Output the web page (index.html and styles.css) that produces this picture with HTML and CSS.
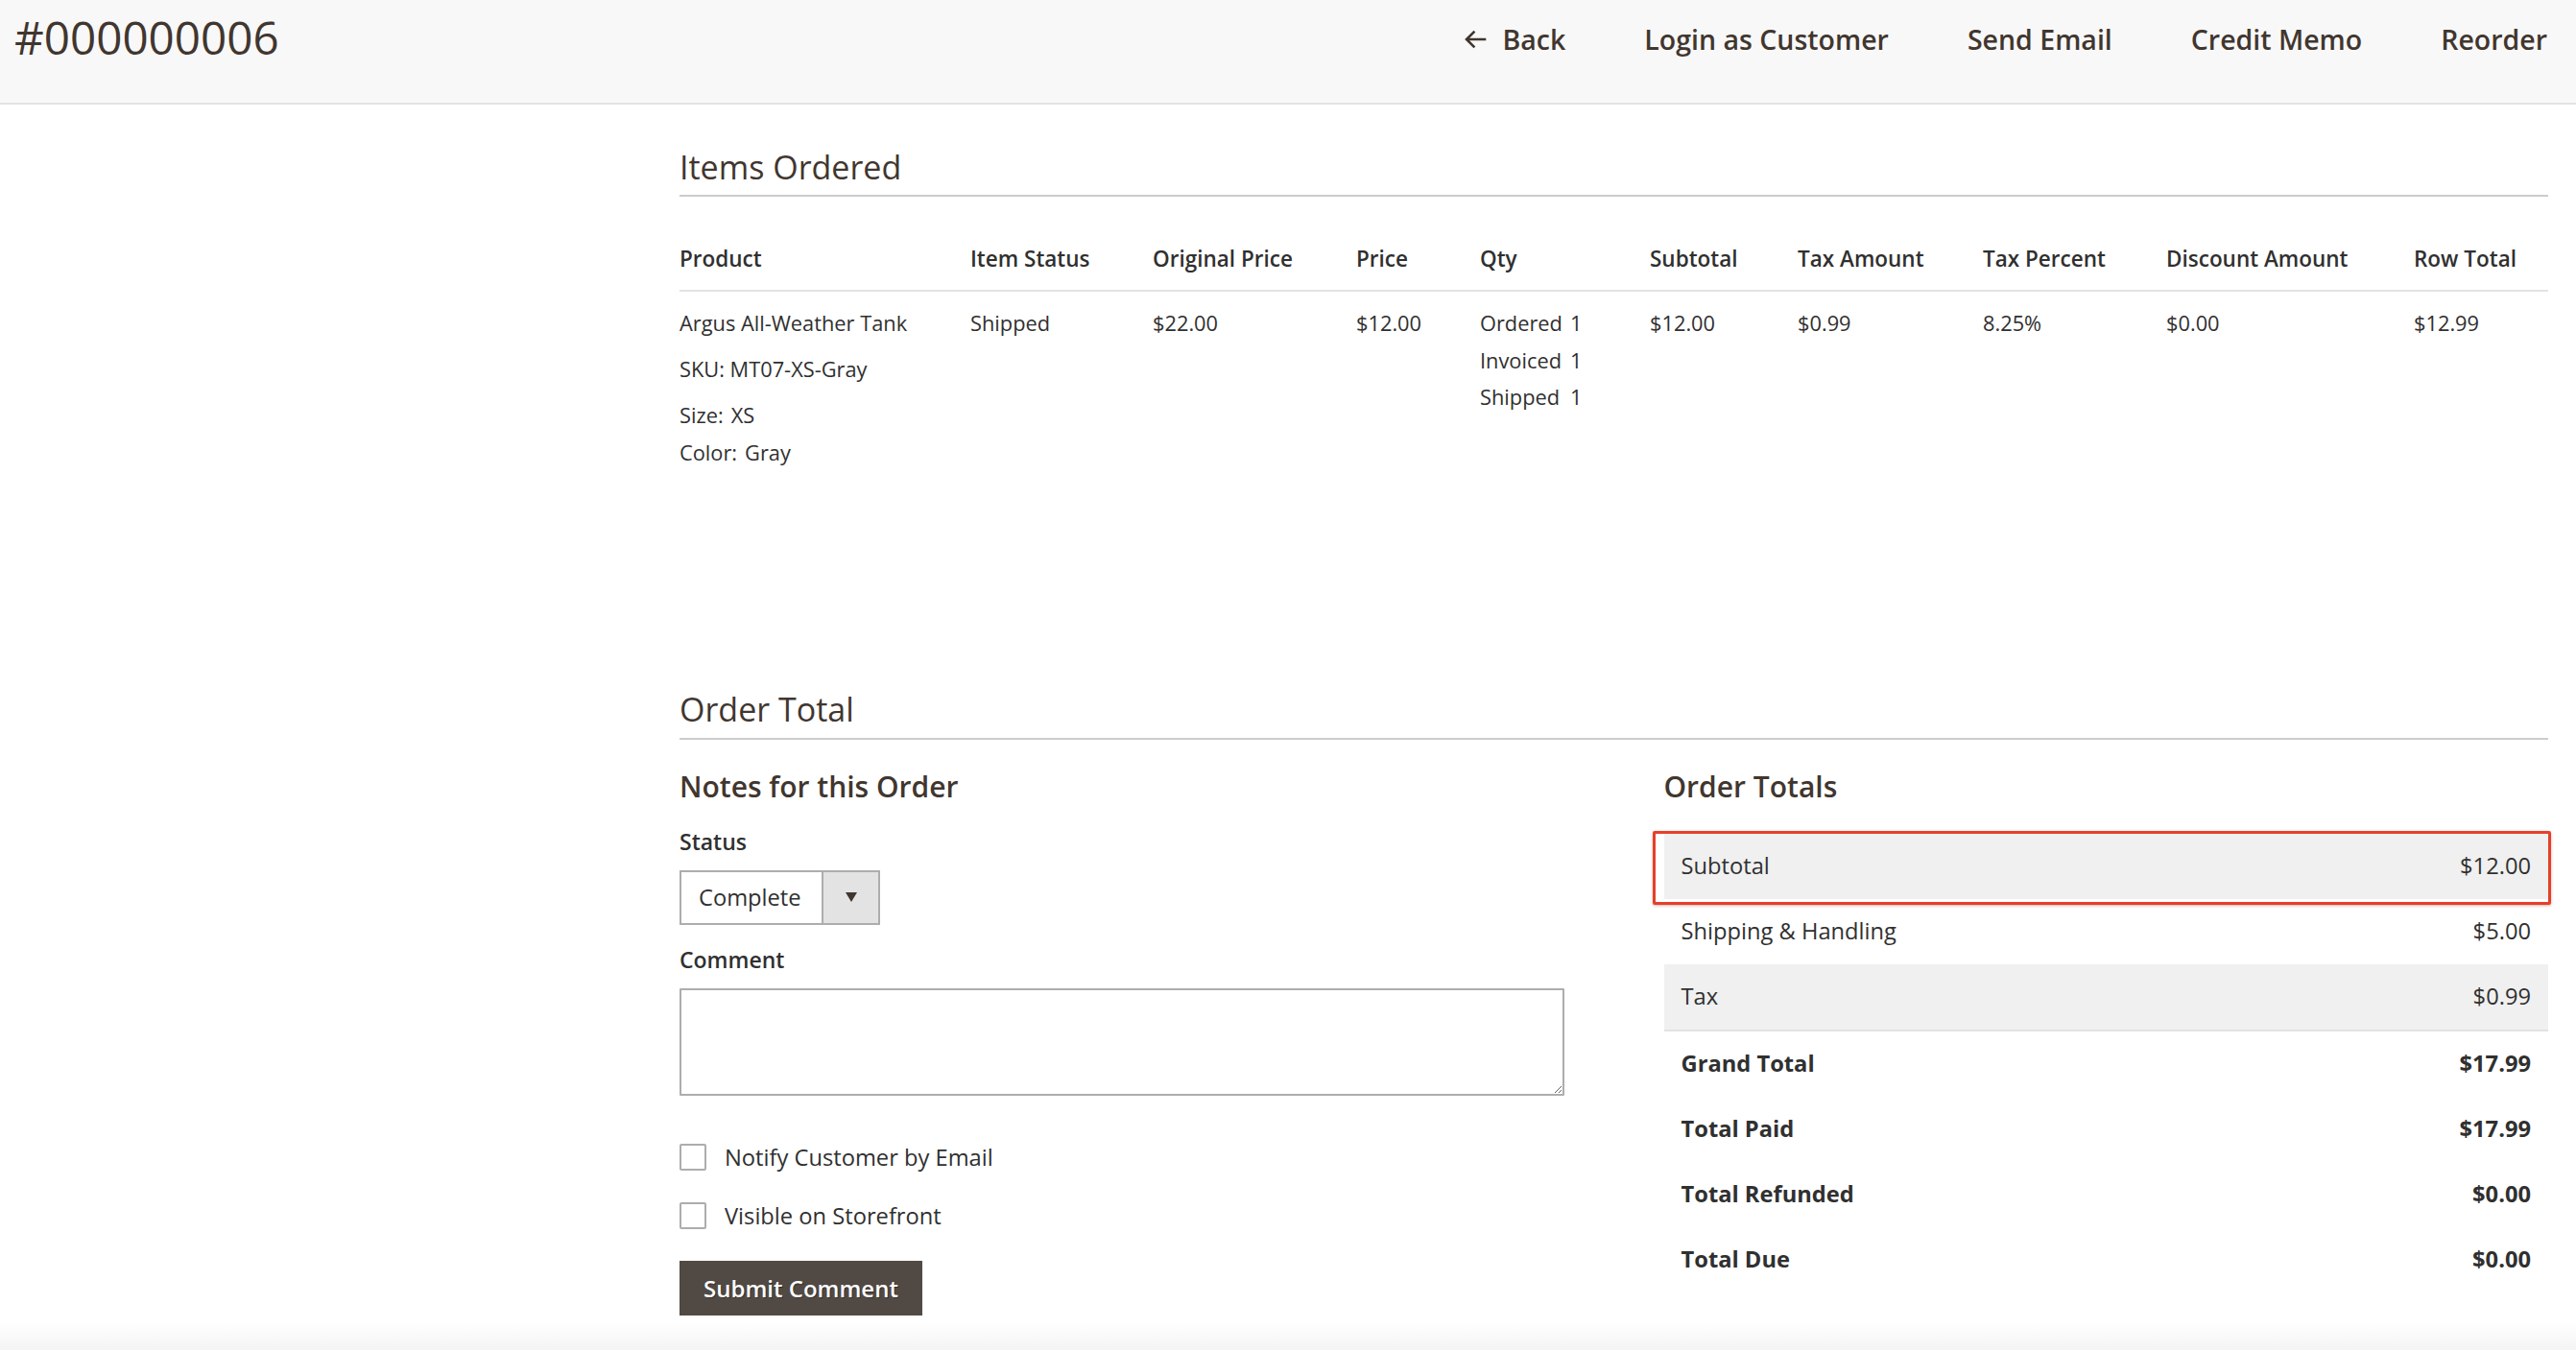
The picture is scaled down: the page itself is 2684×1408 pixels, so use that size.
FILE: index.html
```html
<!DOCTYPE html>
<html lang="en">
<head>
<meta charset="utf-8">
<title>#000000006</title>
<link rel="stylesheet" href="styles.css">
</head>
<body>
<header class="page-header">
  <h1 class="page-title">#000000006</h1>
  <nav class="page-actions">
    <a class="action action-back"><svg class="back-icon" viewBox="0 0 24 22" width="24" height="22"><path d="M22 11H3.5M10.5 3.5L3 11l7.5 7.5" fill="none" stroke="#41362f" stroke-width="2.6" stroke-linecap="square"/></svg>Back</a>
    <a class="action">Login as Customer</a>
    <a class="action">Send Email</a>
    <a class="action">Credit Memo</a>
    <a class="action">Reorder</a>
  </nav>
</header>

<div class="page-body">
  <aside class="side-col"></aside>
  <main class="main-col">
    <section class="items-section">
      <h2 class="section-title">Items Ordered</h2>
      <table class="items-table">
        <colgroup>
          <col class="c-product"><col class="c-status"><col class="c-orig"><col class="c-price"><col class="c-qty"><col class="c-sub"><col class="c-taxamt"><col class="c-taxpct"><col class="c-disc"><col class="c-row">
        </colgroup>
        <thead>
          <tr>
            <th>Product</th><th>Item Status</th><th>Original Price</th><th>Price</th><th>Qty</th><th>Subtotal</th><th>Tax Amount</th><th>Tax Percent</th><th>Discount Amount</th><th>Row Total</th>
          </tr>
        </thead>
        <tbody>
          <tr>
            <td>
              <div class="product-name">Argus All-Weather Tank</div>
              <div class="product-sku">SKU: MT07-XS-Gray</div>
              <dl class="product-options">
                <div class="opt"><dt>Size:</dt><dd>XS</dd></div>
                <div class="opt"><dt>Color:</dt><dd>Gray</dd></div>
              </dl>
            </td>
            <td>Shipped</td>
            <td>$22.00</td>
            <td>$12.00</td>
            <td>
              <table class="qty-table">
                <tr><th class="qty-label">Ordered</th><td class="qty-val">1</td></tr>
                <tr><th class="qty-label">Invoiced</th><td class="qty-val">1</td></tr>
                <tr><th class="qty-label">Shipped</th><td class="qty-val">1</td></tr>
              </table>
            </td>
            <td>$12.00</td>
            <td>$0.99</td>
            <td>8.25%</td>
            <td>$0.00</td>
            <td>$12.99</td>
          </tr>
        </tbody>
      </table>
    </section>

    <section class="totals-section">
      <h2 class="section-title">Order Total</h2>
      <div class="totals-cols">
        <div class="notes">
          <h3 class="item-title">Notes for this Order</h3>
          <div class="field-label first">Status</div>
          <div class="select">
            <span class="select-value">Complete</span>
            <span class="select-arrow"><svg viewBox="0 0 12 10" width="12" height="10"><path d="M0 0h12L6 10z" fill="#41362f"/></svg></span>
          </div>
          <div class="field-label">Comment</div>
          <textarea class="comment"></textarea>
          <label class="check"><span class="box"></span>Notify Customer by Email</label>
          <label class="check"><span class="box"></span>Visible on Storefront</label>
          <div class="submit">Submit Comment</div>
        </div>
        <div class="order-totals">
          <h3 class="item-title">Order Totals</h3>
          <div class="totals-table">
            <div class="t-row shade"><span>Subtotal</span><span>$12.00</span><div class="annot"></div></div>
            <div class="t-row"><span>Shipping &amp; Handling</span><span>$5.00</span></div>
            <div class="t-row shade last"><span>Tax</span><span>$0.99</span></div>
            <div class="t-row strong"><span>Grand Total</span><span>$17.99</span></div>
            <div class="t-row strong"><span>Total Paid</span><span>$17.99</span></div>
            <div class="t-row strong"><span>Total Refunded</span><span>$0.00</span></div>
            <div class="t-row strong"><span>Total Due</span><span>$0.00</span></div>
          </div>
        </div>
      </div>
    </section>
  </main>
</div>
<footer class="page-footer"></footer>
</body>
</html>
```

FILE: styles.css
```css
* { box-sizing: border-box; }
html, body { margin: 0; padding: 0; }
body {
  font-family: "Open Sans", "Liberation Sans", sans-serif;
  color: #303030;
  background: #ffffff;
  overflow: hidden;
}

/* header */
.page-header {
  height: 109px;
  background: #f8f8f8;
  border-bottom: 2px solid #e3e3e3;
  display: flex;
  justify-content: space-between;
  align-items: flex-start;
  padding: 0 30px 0 15px;
}
.page-title {
  margin: 0;
  padding-top: 15px;
  font-size: 47.6px;
  line-height: 1;
  font-weight: 400;
  color: #41362f;
}
.page-actions {
  display: flex;
  gap: 82px;
  padding-top: 27px;
}
.action {
  display: flex;
  align-items: center;
  font-size: 28.5px;
  line-height: 1;
  font-weight: 600;
  color: #41362f;
  cursor: pointer;
}
.back-icon { margin-right: 17px; }

/* layout */
.page-body {
  display: grid;
  grid-template-columns: 708px 1fr;
  padding-right: 29px;
}
.section-title {
  margin: 43px 0 0;
  font-size: 34px;
  line-height: 40px;
  font-weight: 400;
  color: #41362f;
  padding-bottom: 10px;
  border-bottom: 2px solid #cccccc;
}
.items-section .section-title { margin-top: 45px; padding-bottom: 9px; }

/* items table */
.items-table {
  margin-top: 30px;
  width: 100%;
  table-layout: fixed;
  border-collapse: separate;
  border-spacing: 0;
}
.c-product { width: 303px; }
.c-status { width: 190px; }
.c-orig { width: 212px; }
.c-price { width: 129px; }
.c-qty { width: 177px; }
.c-sub { width: 154px; }
.c-taxamt { width: 193px; }
.c-taxpct { width: 191px; }
.c-disc { width: 258px; }
.c-row { width: auto; }
.items-table > thead > tr > th {
  text-align: left;
  font-size: 22.5px;
  line-height: 30px;
  font-weight: 600;
  color: #303030;
  padding: 20px 0 17px;
  border-bottom: 2px solid #e3e3e3;
  white-space: nowrap;
}
.items-table > tbody > tr > td {
  font-size: 21.8px;
  line-height: 38.5px;
  padding: 14px 0 0;
  vertical-align: top;
  color: #303030;
}
.product-sku { margin-top: 9px; }
.product-options { margin: 10px 0 0; }
.opt { display: flex; }
.opt dt { margin: 0; }
.opt dd { margin: 0 0 0 8px; }
.qty-table { border-spacing: 0; border-collapse: separate; }
.qty-label {
  width: 94px;
  padding: 0;
  text-align: left;
  font-weight: 400;
  font-size: 21.8px;
  line-height: 38.5px;
}
.qty-val {
  padding: 0;
  font-size: 21.8px;
  line-height: 38.5px;
}

/* totals section */
.totals-section { margin-top: 228px; }
.totals-cols {
  display: grid;
  grid-template-columns: 1fr 1fr;
  column-gap: 104px;
  margin-top: 31px;
}
.item-title {
  margin: 0;
  font-size: 30px;
  line-height: 36px;
  font-weight: 600;
  color: #41362f;
}
.notes { display: flex; flex-direction: column; align-items: flex-start; }
.field-label {
  font-size: 23px;
  line-height: 30px;
  font-weight: 600;
  color: #303030;
  margin-top: 21px;
}
.field-label.first { margin-top: 23.5px; }
.select {
  margin-top: 15px;
  width: 209px;
  height: 57px;
  border: 2px solid #adadad;
  display: flex;
  background: #fff;
}
.select-value {
  flex: 1;
  padding-left: 18px;
  font-size: 23.7px;
  line-height: 53px;
  color: #303030;
}
.select-arrow {
  width: 59px;
  border-left: 2px solid #adadad;
  background: #e3e3e3;
  display: flex;
  align-items: center;
  justify-content: center;
}
.comment {
  margin-top: 15px;
  width: 100%;
  height: 112px;
  border: 2px solid #adadad;
  border-radius: 1px;
  resize: vertical;
  font-family: inherit;
  font-size: 23.7px;
}
.check {
  display: flex;
  align-items: center;
  font-size: 23.7px;
  line-height: 28px;
  color: #303030;
  margin-top: 33px;
}
.comment + .check { margin-top: 50px; }
.box {
  width: 28px;
  height: 28px;
  border: 2px solid #adadad;
  border-radius: 2px;
  background: #fff;
  margin-right: 19px;
}
.submit {
  margin-top: 33px;
  height: 57px;
  padding: 0 25px;
  background: #514943;
  color: #ffffff;
  font-size: 24px;
  font-weight: 600;
  line-height: 57px;
  text-shadow: 1px 1px 0 rgba(0, 0, 0, 0.35);
}

.totals-table { margin-top: 30.5px; }
.t-row {
  position: relative;
  height: 68px;
  display: flex;
  justify-content: space-between;
  padding: 0 18px;
  font-size: 23.7px;
  line-height: 66px;
  color: #303030;
}
.t-row.shade { background: #f0f0f0; }
.t-row.last { border-bottom: 2px solid #e3e3e3; height: 70px; }
.t-row.strong { font-weight: 700; }
.annot {
  position: absolute;
  left: -12px;
  top: -3px;
  width: 936px;
  height: 77px;
  border: 3px solid #e5402a;
  border-radius: 2px;
  box-shadow: 0 1px 3px rgba(120, 30, 20, 0.35);
  pointer-events: none;
}

.page-footer {
  margin-top: 6px;
  height: 30px;
  background: linear-gradient(#ffffff, #f4f4f4);
}
```
